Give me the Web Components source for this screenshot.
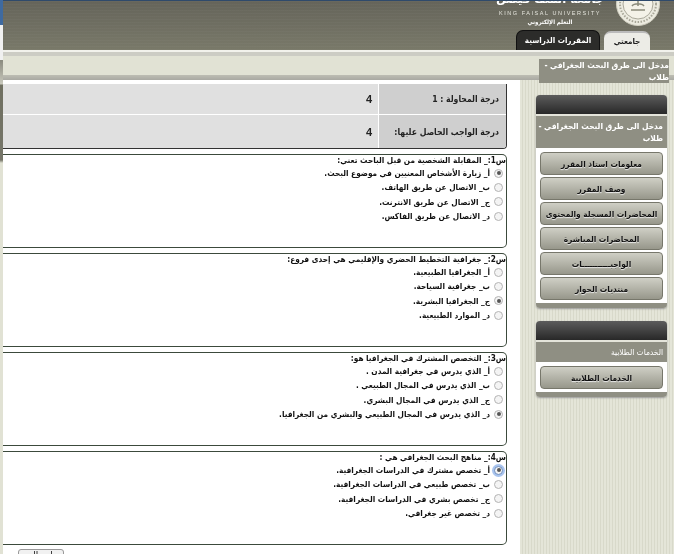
<!DOCTYPE html>
<html lang="ar">
<head>
<meta charset="utf-8">
<title>مدخل الى طرق البحث الجغرافي</title>
<style>
  html, body { margin: 0; height: 554px; overflow: hidden; background: #fff; }
  body { font: bold 10px "DejaVu Sans", sans-serif; font-stretch: condensed; }
  .page { display: flex; height: 554px; filter: blur(.3px); }
  .strip { width: 3px; flex: none; background: linear-gradient(#3f6aa0 0, #3f6aa0 25px, #f0f0f0 25px, #f0f0f0 60px, #8a8a7e 60px, #c8c8bc 84px, #6f6f60 85px, #77776a 160px, #e1e2d4 163px); }
  .main { flex: 1; display: flex; flex-direction: column; min-width: 0; }
  .body { flex: 1; display: flex; min-height: 0; }
  .content { width: 517px; flex: none; display: flex; flex-direction: column; background: #fff; overflow: hidden; }
  .side { flex: 1; padding: 15px 4px 0 16px; display: flex; flex-direction: column; gap: 13px; background: repeating-linear-gradient(90deg, #e4e5d8 0 2px, #d8d9ca 2px 3px); }
</style>
</head>
<body>
<div class="page">
  <div class="strip"></div>
  <div class="main">
    <kfu-header></kfu-header>
    <div class="body">
      <div class="content">
        <score-table></score-table>
        <quiz-question heading="س1:_ المقابلة الشخصية من قبل الباحث تعني:" checked="0"
          options="أ_ زيارة الأشخاص المعنيين في موضوع البحث.|ب_ الاتصال عن طريق الهاتف.|ج_ الاتصال عن طريق الانترنت.|د_ الاتصال عن طريق الفاكس."></quiz-question>
        <quiz-question heading="س2:_ جغرافية التخطيط الحضري والإقليمي هي إحدى فروع:" checked="2"
          options="أ_ الجغرافيا الطبيعية.|ب_ جغرافية السياحة.|ج_ الجغرافيا البشرية.|د_ الموارد الطبيعية."></quiz-question>
        <quiz-question heading="س3:_ التخصص المشترك في الجغرافيا هو:" checked="3"
          options="أ_ الذي يدرس في جغرافية المدن .|ب_ الذي يدرس في المجال الطبيعي .|ج_ الذي يدرس في المجال البشري.|د_ الذي يدرس في المجال الطبيعي والبشري من الجغرافيا."></quiz-question>
        <quiz-question heading="س4:_ مناهج البحث الجغرافي هي :" checked="0" focused
          options="أ_ تخصص مشترك في الدراسات الجغرافية.|ب_ تخصص طبيعي في الدراسات الجغرافية.|ج_ تخصص بشري في الدراسات الجغرافية.|د_ تخصص غير جغرافي."></quiz-question>
        <submit-button>إرسال</submit-button>
      </div>
      <div class="side">
        <side-panel heading="مدخل الى طرق البحث الجغرافي - طلاب">
          <side-button>معلومات استاذ المقرر</side-button>
          <side-button>وصف المقرر</side-button>
          <side-button>المحاضرات المسجلة والمحتوى</side-button>
          <side-button>المحاضرات المباشرة</side-button>
          <side-button>الواجبـــــــــــات</side-button>
          <side-button>منتديات الحوار</side-button>
        </side-panel>
        <side-panel heading="الخدمات الطلابية" thin>
          <side-button>الخدمات الطلابية</side-button>
        </side-panel>
      </div>
    </div>
  </div>
</div>

<script>
  class KfuHeader extends HTMLElement {
    constructor() {
      super();
      const shadow = this.attachShadow({ mode: "open" });
      shadow.innerHTML = `
        <style>
          :host { display: block; position: relative; height: 80px; flex: none; font-family: "DejaVu Sans", sans-serif; font-stretch: condensed; }
          .top {
            height: 50px; box-sizing: border-box; border-top: 1px solid #2f4a6b;
            background: repeating-linear-gradient(0deg, rgba(255,255,255,.025) 0 1px, transparent 1px 3px), linear-gradient(#65645a, #797969);
            display: flex; flex-direction: column; align-items: flex-end; padding-right: 14px; overflow: hidden;
          }
          .brand { display: flex; gap: 9px; height: 25px; }
          .names { width: 114px; display: flex; flex-direction: column; align-items: center; color: #fff; overflow: hidden; }
          .ar { font-size: 13px; line-height: 12px; margin-top: -8px; white-space: nowrap; }
          .en { font: 5.5px/7px "Liberation Sans", sans-serif; letter-spacing: 1.55px; white-space: nowrap; color: #e4e4dc; margin-top: 5px; }
          .sub { font-size: 6px; line-height: 8px; margin-top: 1px; }
          svg { margin-top: -19px; display: block; }
          .tabs { display: flex; gap: 4px; align-items: flex-end; margin-top: 4px; height: 20px; padding-right: 10px; }
          .tab { height: 19px; box-sizing: border-box; font-size: 8px; font-weight: bold; display: flex; align-items: center; justify-content: center; border-radius: 7px 7px 0 0; }
          .dark { width: 84px; height: 20px; background: #2c2c2a; color: #fff; border: 1px solid #111; border-bottom: 0; }
          .light { width: 46px; background: #ecece6; color: #222; border-top: 2px solid #bbb; }
          .gap { height: 2px; background: #f2f2ec; }
          .b1 { height: 4px; background: #ccccc4; }
          .bar { height: 19px; background: #e1e2d4; }
          .b2 { height: 5px; background: linear-gradient(#bdbdb3, #a9a9a2); }
          .title {
            position: absolute; right: 5px; top: 59px; width: 130px; height: 24px; box-sizing: border-box;
            background: #8f8f83; color: #fff; direction: rtl; font-size: 8.3px; line-height: 12px; font-weight: bold; padding: 0;
          }
        </style>
        <div class="top">
          <div class="brand">
            <div class="names">
              <div class="ar">جامعة الملك فيصل</div>
              <div class="en">KING FAISAL UNIVERSITY</div>
              <div class="sub">التعلم الإلكتروني</div>
            </div>
            <svg width="44" height="44" viewBox="0 0 44 44">
              <circle cx="22" cy="22" r="21.5" fill="#ecebe0" stroke="#d0cec0"/>
              <circle cx="22" cy="22" r="18" fill="none" stroke="#a8a698" stroke-dasharray="1.5 1.5" stroke-width="2"/>
              <circle cx="22" cy="22" r="15" fill="#f4f2e8" stroke="#aaa89a"/>
              <path d="M15 28h14M16 24c2-3 10-3 12 0M22 16v8" fill="none" stroke="#8a8a7a" stroke-width="1.5"/>
            </svg>
          </div>
          <div class="tabs">
            <div class="tab dark">المقررات الدراسية</div>
            <div class="tab light">جامعتي</div>
          </div>
        </div>
        <div class="gap"></div>
        <div class="b1"></div>
        <div class="bar"></div>
        <div class="b2"></div>
        <div class="title">مدخل الى طرق البحث الجغرافي - طلاب</div>
      `;
    }
  }

  class ScoreTable extends HTMLElement {
    constructor() {
      super();
      const shadow = this.attachShadow({ mode: "open" });
      shadow.innerHTML = `
        <style>
          :host { display: block; width: 504px; flex: none; margin-top: 4px; font-family: "DejaVu Sans", sans-serif; font-stretch: condensed; direction: rtl; color: #222; }
          .wrap { display: grid; grid-template-columns: 127px 1fr; grid-template-rows: 30px 33px; gap: 1px; background: #fff; border: solid #333; border-width: 0 1px 1px 0; border-radius: 0 0 4px 0; overflow: hidden; }
          .label { background: #cfcfcf; font-size: 8.6px; font-weight: bold; display: flex; align-items: center; padding-right: 7px; }
          .value { background: #e0e0e0; font: bold 11px "Liberation Sans", sans-serif; display: flex; align-items: center; padding-right: 6px; }
        </style>
        <div class="wrap">
          <div class="label">درجة المحاولة : 1</div><div class="value">4</div>
          <div class="label">درجة الواجب الحاصل عليها:</div><div class="value">4</div>
        </div>
      `;
    }
  }

  class QuizQuestion extends HTMLElement {
    constructor() {
      super();
      const shadow = this.attachShadow({ mode: "open" });
      const options = this.getAttribute("options").split("|");
      const checked = Number(this.getAttribute("checked"));
      const focused = this.hasAttribute("focused");
      const rows = options.map((text, i) => `
        <div class="row">
          <span class="radio ${i === checked ? "on" : ""} ${i === checked && focused ? "focus" : ""}"></span>
          <span>${text}</span>
        </div>`).join("");
      shadow.innerHTML = `
        <style>
          :host { display: block; width: 504px; height: 94px; box-sizing: border-box; flex: none; margin-top: 5px; border: 1px solid #3c4a3c; border-left: 0; border-radius: 0 5px 5px 0; direction: rtl; color: #111; font: bold 8.2px "DejaVu Sans", sans-serif; font-stretch: condensed; }
          .head { height: 11px; line-height: 11px; white-space: nowrap; }
          .row { display: flex; align-items: center; gap: 4px; height: 14.3px; padding-right: 3px; white-space: nowrap; }
          .radio { width: 7px; height: 7px; flex: none; border: 1px solid #b4b4b4; border-radius: 50%; background: #f4f4f4; position: relative; }
          .on::after { content: ""; position: absolute; inset: 1.5px; background: #555; border-radius: 50%; }
          .focus { box-shadow: 0 0 0 2px #a9c4ee; border-color: #6f8fc0; }
        </style>
        <div class="head">${this.getAttribute("heading")}</div>
        ${rows}
      `;
    }
  }

  class SubmitButton extends HTMLElement {
    constructor() {
      super();
      const shadow = this.attachShadow({ mode: "open" });
      shadow.innerHTML = `
        <style>
          :host { display: block; width: 46px; height: 22px; box-sizing: border-box; flex: none; margin: 4px 0 0 15px; border: 1px solid #999; border-radius: 3px; background: #f1f1f1; text-align: center; direction: rtl; font: 9px "DejaVu Sans", sans-serif; color: #111; }
        </style>
        <slot></slot>
      `;
    }
  }

  class SidePanel extends HTMLElement {
    constructor() {
      super();
      const shadow = this.attachShadow({ mode: "open" });
      shadow.innerHTML = `
        <style>
          :host { display: block; width: 131px; flex: none; font-family: "DejaVu Sans", sans-serif; font-stretch: condensed; direction: rtl; box-shadow: 0 1px 2px #999; border-radius: 4px; }
          .cap { height: 19px; background: linear-gradient(#5c5c5c, #282828); border-radius: 4px 4px 0 0; border-bottom: 2px solid #e4e4da; }
          .name { height: 32px; box-sizing: border-box; padding: 4px 4px 0 0; background: #8f8f83; color: #fff; font-size: 8.3px; line-height: 12px; font-weight: bold; }
          :host([thin]) .name { height: 20px; font-weight: normal; }
          .list { background: #fff; padding: 4px 4px 3px; display: flex; flex-direction: column; gap: 2px; }
          .foot { height: 5px; background: #8f8f83; border-radius: 0 0 4px 4px; }
        </style>
        <div class="cap"></div>
        <div class="name">${this.getAttribute("heading")}</div>
        <div class="list"><slot></slot></div>
        <div class="foot"></div>
      `;
    }
  }

  class SideButton extends HTMLElement {
    constructor() {
      super();
      const shadow = this.attachShadow({ mode: "open" });
      shadow.innerHTML = `
        <style>
          :host { display: flex; height: 23px; box-sizing: border-box; align-items: center; justify-content: center; border: 1px solid #77776b; border-radius: 4px; background: linear-gradient(#cfcfc5, #97978b); color: #111; font: bold 8.3px "DejaVu Sans", sans-serif; font-stretch: condensed; text-shadow: 0 1px 1px #eee; white-space: nowrap; overflow: hidden; }
        </style>
        <slot></slot>
      `;
    }
  }

  customElements.define("kfu-header", KfuHeader);
  customElements.define("score-table", ScoreTable);
  customElements.define("quiz-question", QuizQuestion);
  customElements.define("submit-button", SubmitButton);
  customElements.define("side-panel", SidePanel);
  customElements.define("side-button", SideButton);
</script>
</body>
</html>
